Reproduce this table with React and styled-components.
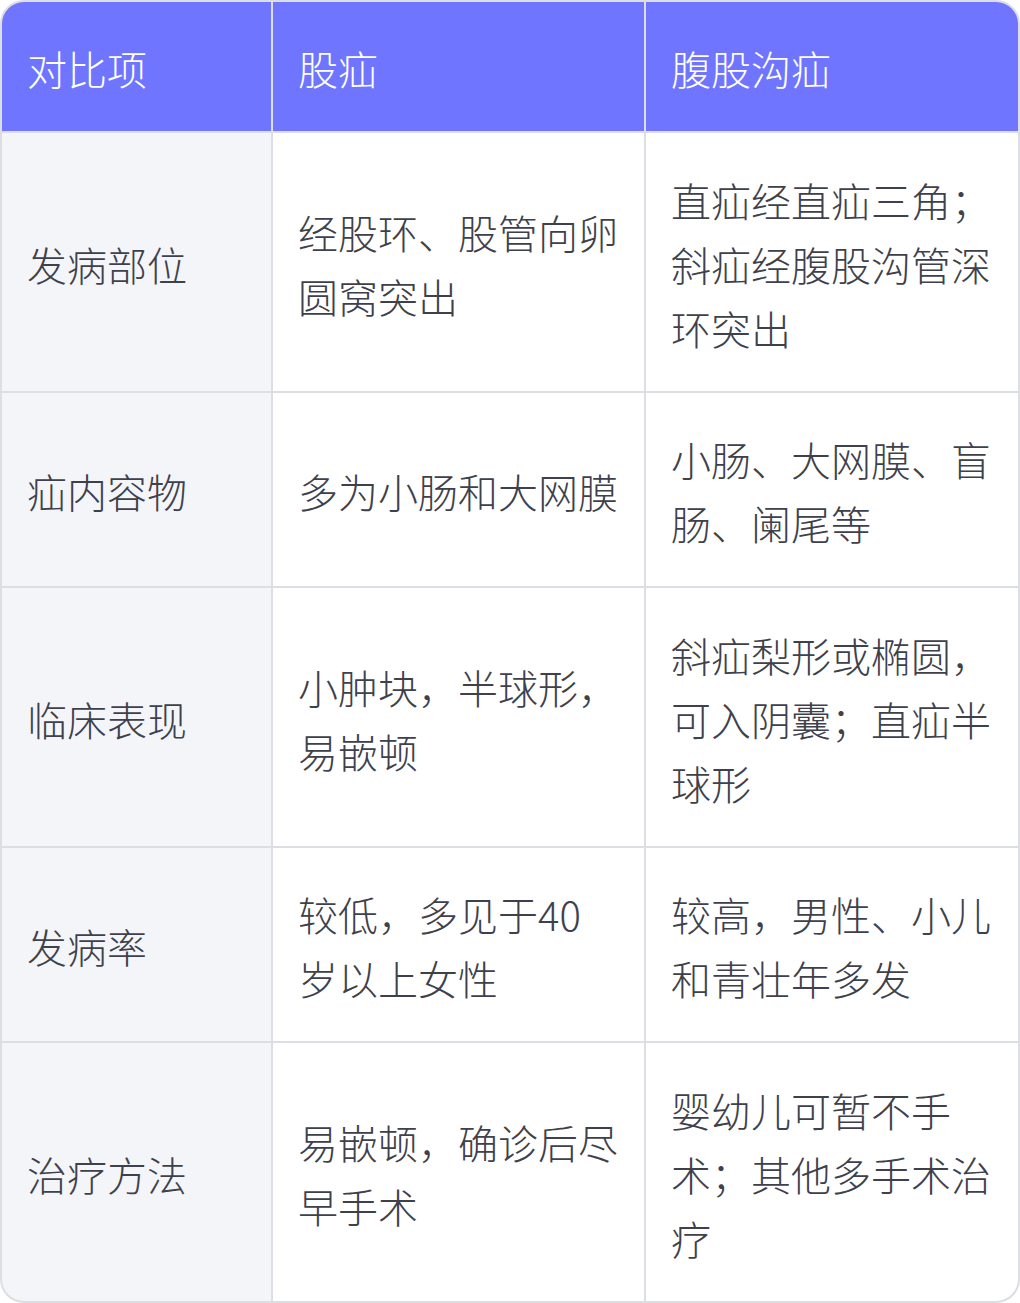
import React from 'react';
import styled, { createGlobalStyle } from 'styled-components';

const GlobalStyle = createGlobalStyle`
  html, body {
    margin: 0;
    padding: 0;
    background: #ffffff;
  }
  body {
    font-family: "Noto Sans CJK SC", "Noto Sans", sans-serif;
  }
`;

const Table = styled.div`
  width: 1020px;
  box-sizing: border-box;
  display: grid;
  grid-template-columns: 269px 371px 1fr;
  grid-template-rows: 129px 258px 193px 258px 193px 258px;
  gap: 2px;
  background: #dddee3;
  border: 2px solid #dddee3;
  border-radius: 24px;
  overflow: hidden;
`;

const Cell = styled.div`
  display: flex;
  align-items: center;
  padding: 34px 24px 31px 25px;
  font-size: 40px;
  line-height: 64px;
  font-weight: 300;
  color: ${(p) => (p.$head ? '#ffffff' : '#3e414c')};
  background: ${(p) => (p.$head ? '#6f75ff' : p.$label ? '#f4f5f9' : '#ffffff')};
  word-break: break-all;
`;

const header = ['对比项', '股疝', '腹股沟疝'];

const rows = [
  ['发病部位', '经股环、股管向卵圆窝突出', '直疝经直疝三角；斜疝经腹股沟管深环突出'],
  ['疝内容物', '多为小肠和大网膜', '小肠、大网膜、盲肠、阑尾等'],
  ['临床表现', '小肿块，半球形，易嵌顿', '斜疝梨形或椭圆，可入阴囊；直疝半球形'],
  ['发病率', '较低，多见于40岁以上女性', '较高，男性、小儿和青壮年多发'],
  ['治疗方法', '易嵌顿，确诊后尽早手术', '婴幼儿可暂不手术；其他多手术治疗'],
];

export default function App() {
  return (
    <>
      <GlobalStyle />
      <Table>
        {header.map((h) => (
          <Cell key={h} $head>
            {h}
          </Cell>
        ))}
        {rows.map((r) =>
          r.map((c, i) => (
            <Cell key={r[0] + i} $label={i === 0}>
              {c}
            </Cell>
          ))
        )}
      </Table>
    </>
  );
}
